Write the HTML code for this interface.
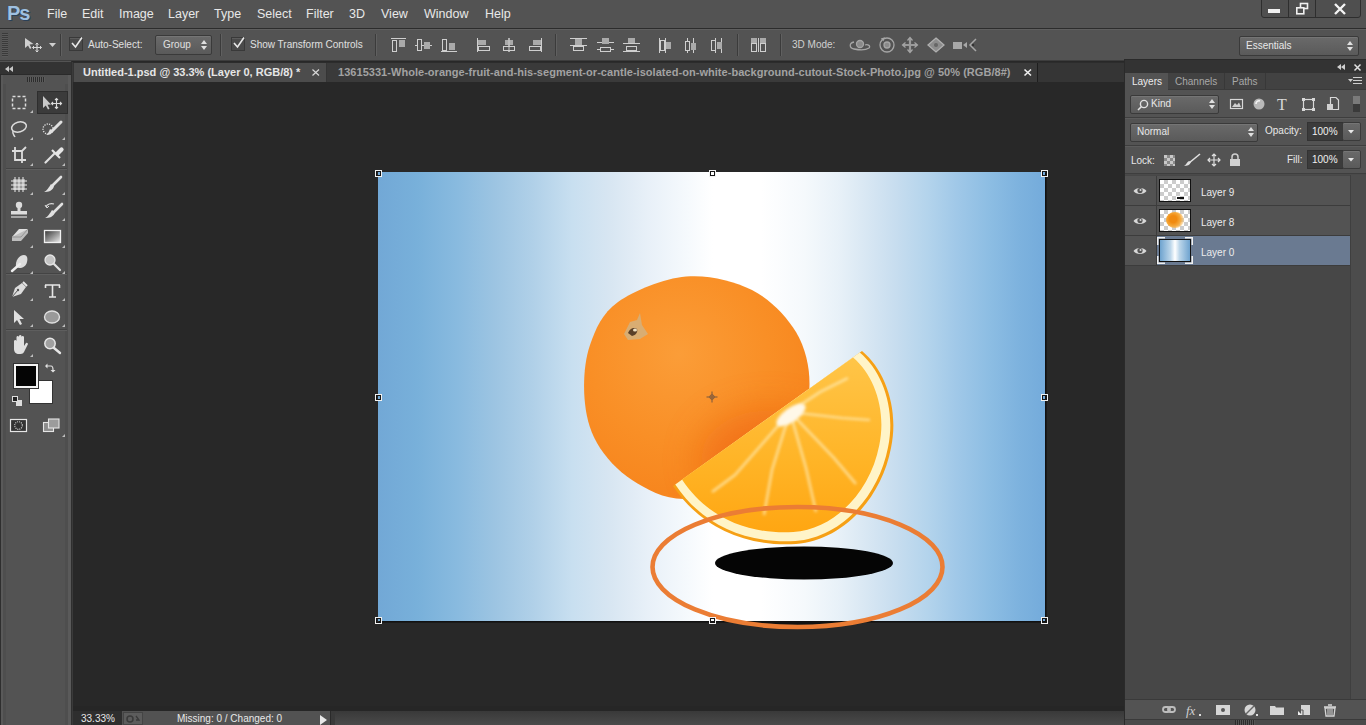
<!DOCTYPE html>
<html><head><meta charset="utf-8">
<style>
*{margin:0;padding:0;box-sizing:border-box}
html,body{width:1366px;height:725px;overflow:hidden;background:#282828;font-family:"Liberation Sans",sans-serif;color:#e0e0e0}
.a{position:absolute}
.t{position:absolute;white-space:nowrap;line-height:1}
svg{position:absolute;overflow:visible}
.menu{font-size:12.5px;color:#e8e8e8;top:8px}
.opt{font-size:10px;color:#e0e0e0}
.vs{position:absolute;width:2px;border-left:1px solid #3b3b3b;border-right:1px solid #606060}
.hs{position:absolute;height:2px;border-top:1px solid #3b3b3b;border-bottom:1px solid #606060}
.btn{position:absolute;border:1px solid #3a3a3a;border-radius:2px;background:linear-gradient(#6a6a6a,#5a5a5a);box-shadow:inset 0 1px 0 #757575}
.cb{position:absolute;width:14px;height:14px;border:1px solid #393939;background:#4a4a4a;box-shadow:inset 0 1px 0 #5c5c5c}
.tool{stroke:#d8d8d8;fill:none;stroke-width:1.3}
.tri{position:absolute;width:0;height:0;border-left:3px solid transparent;border-bottom:3px solid #bdbdbd}
</style></head><body>
<!-- ============ MENU BAR ============ -->
<div class="a" style="left:0;top:0;width:1366px;height:28px;background:#535353"></div>
<div class="a" style="left:0;top:28px;width:1366px;height:1px;background:#2c2c2c"></div>
<div class="t" style="left:7px;top:3px;font-size:20px;font-weight:bold;color:#9fc0e0;letter-spacing:-1px;text-shadow:1px 1px 0 #2a4058,-1px 0 0 #3a4a5a">Ps</div>
<div class="t menu" style="left:47px">File</div>
<div class="t menu" style="left:82px">Edit</div>
<div class="t menu" style="left:119px">Image</div>
<div class="t menu" style="left:168px">Layer</div>
<div class="t menu" style="left:214px">Type</div>
<div class="t menu" style="left:257px">Select</div>
<div class="t menu" style="left:306px">Filter</div>
<div class="t menu" style="left:349px">3D</div>
<div class="t menu" style="left:381px">View</div>
<div class="t menu" style="left:424px">Window</div>
<div class="t menu" style="left:485px">Help</div>
<!-- window buttons -->
<div class="a" style="left:1261px;top:-3px;width:100px;height:21px;border:1px solid #2e2e2e;border-radius:0 0 3px 3px;background:#4f4f4f"></div>
<div class="a" style="left:1288px;top:0;width:1px;height:18px;background:#2e2e2e"></div>
<div class="a" style="left:1315px;top:0;width:1px;height:18px;background:#2e2e2e"></div>
<div class="a" style="left:1268px;top:9px;width:12px;height:4px;background:#f0f0f0"></div>
<svg style="left:1296px;top:3px" width="14" height="12"><rect x="4.5" y="0.5" width="7" height="5" fill="none" stroke="#f0f0f0" stroke-width="1.6"/><rect x="0.8" y="4.8" width="7" height="6" fill="#4f4f4f" stroke="#f0f0f0" stroke-width="1.6"/></svg>
<svg style="left:1334px;top:3px" width="12" height="12"><path d="M1 1L11 11M11 1L1 11" stroke="#f4f4f4" stroke-width="2.4"/></svg>

<!-- ============ OPTIONS BAR ============ -->
<div class="a" style="left:0;top:29px;width:1366px;height:32px;background:#535353;border-top:1px solid #5f5f5f;border-bottom:1px solid #3d3d3d"></div>
<div class="a" style="left:2px;top:33px;width:6px;height:24px;background:repeating-linear-gradient(#3a3a3a 0 1px,#5a5a5a 1px 2px)"></div>
<!-- move tool icon -->
<svg style="left:24px;top:37px" width="20" height="16"><path d="M1 1L1 11L4 8.5L6 12L7.5 11L5.5 7.5L9.5 7Z" fill="#cfcfcf"/><path d="M13 6V15M8.5 10.5H17.5" stroke="#d8d8d8" stroke-width="1.2"/><path d="M11.5 7.5L13 6L14.5 7.5M11.5 13.5L13 15L14.5 13.5M10 9L8.5 10.5L10 12M16 9L17.5 10.5L16 12" stroke="#d8d8d8" fill="none" stroke-width="1"/></svg>
<svg style="left:49px;top:43px" width="7" height="4"><path d="M0 0H7L3.5 4Z" fill="#d0d0d0"/></svg>
<div class="vs" style="left:60px;top:34px;height:22px"></div>
<div class="cb" style="left:69px;top:37px"></div>
<svg style="left:70px;top:36px" width="14" height="14"><path d="M2 7L5.5 11L12 1.5" stroke="#e8e8e8" stroke-width="1.6" fill="none"/></svg>
<div class="t opt" style="left:88px;top:40px">Auto-Select:</div>
<div class="btn" style="left:155px;top:35px;width:57px;height:20px"></div>
<div class="t opt" style="left:163px;top:40px">Group</div>
<svg style="left:201px;top:40px" width="6" height="10"><path d="M0 4L3 0L6 4ZM0 6L3 10L6 6Z" fill="#e0e0e0"/></svg>
<div class="vs" style="left:220px;top:34px;height:22px"></div>
<div class="cb" style="left:231px;top:37px"></div>
<svg style="left:232px;top:36px" width="14" height="14"><path d="M2 7L5.5 11L12 1.5" stroke="#e8e8e8" stroke-width="1.6" fill="none"/></svg>
<div class="t opt" style="left:250px;top:40px">Show Transform Controls</div>
<div class="vs" style="left:375px;top:34px;height:22px"></div>
<!-- align icons -->
<svg style="left:390px;top:37px" width="160" height="16" fill="none" stroke="#cfcfcf" stroke-width="1">
 <path d="M1 1.5H16"/><rect x="2.5" y="3.5" width="4" height="11"/><rect x="9" y="3" width="6" height="7" fill="#aaa" stroke="none"/>
 <path d="M25 8.5H42"/><rect x="27.5" y="2.5" width="4" height="11" fill="#535353"/><rect x="34" y="5" width="6" height="7" fill="#aaa" stroke="none"/>
 <path d="M51 14.5H67"/><rect x="52.5" y="2.5" width="4" height="11"/><rect x="59" y="6" width="6" height="7" fill="#aaa" stroke="none"/>
 <path d="M87.5 1V15"/><rect x="88" y="3" width="8" height="5" fill="#aaa" stroke="none"/><rect x="88.5" y="9.5" width="11" height="4"/>
 <path d="M119 1V15"/><rect x="115" y="3" width="8" height="5" fill="#aaa" stroke="none"/><rect x="113.5" y="9.5" width="11" height="4" fill="#535353"/><path d="M119 1V15"/>
 <path d="M151.5 1V15"/><rect x="143" y="3" width="8" height="5" fill="#aaa" stroke="none"/><rect x="139.5" y="9.5" width="11" height="4"/>
</svg>
<div class="vs" style="left:555px;top:34px;height:22px"></div>
<svg style="left:568px;top:37px" width="160" height="16" fill="none" stroke="#cfcfcf" stroke-width="1">
 <path d="M2 1.5H19M2 8.5H19"/><rect x="7" y="2" width="7" height="6" fill="#aaa" stroke="none"/><rect x="5.5" y="9.5" width="10" height="4"/>
 <path d="M29 5.5H46M29 12.5H46"/><rect x="34" y="1" width="7" height="6" fill="#aaa" stroke="none"/><rect x="32.5" y="10.5" width="10" height="4" fill="#535353"/>
 <path d="M55 6.5H72M55 14.5H72"/><rect x="60" y="1" width="7" height="5" fill="#aaa" stroke="none"/><rect x="58.5" y="9.5" width="10" height="4"/>
 <path d="M91.5 1V16M97.5 1V16"/><rect x="92.5" y="3.5" width="4" height="10"/><rect x="98" y="5" width="5" height="7" fill="#aaa" stroke="none"/>
 <path d="M119.5 1V16M125.5 1V16"/><rect x="117.5" y="4.5" width="4" height="9" fill="#535353"/><rect x="123" y="6" width="5" height="7" fill="#aaa" stroke="none"/>
 <path d="M147.5 1V16M153.5 1V16"/><rect x="143.5" y="3.5" width="4" height="10"/><rect x="149" y="5" width="5" height="7" fill="#aaa" stroke="none"/>
</svg>
<div class="vs" style="left:737px;top:34px;height:22px"></div>
<svg style="left:750px;top:37px" width="18" height="16" fill="none" stroke="#cfcfcf" stroke-width="1"><rect x="1" y="1" width="6" height="5" fill="#aaa" stroke="none"/><rect x="1.5" y="6.5" width="5" height="8"/><path d="M8.5 1V15"/><rect x="10" y="1" width="6" height="5" fill="#aaa" stroke="none"/><rect x="10.5" y="6.5" width="5" height="8"/></svg>
<div class="vs" style="left:780px;top:34px;height:22px"></div>
<div class="t opt" style="left:792px;top:40px;color:#d0d0d0">3D Mode:</div>
<svg style="left:848px;top:36px" width="140" height="18" fill="none" stroke="#a6a6a6" stroke-width="1.3">
 <circle cx="12" cy="8" r="3.5" fill="#8a8a8a"/><path d="M6 6C1 7 1 12 6 13C11 14 18 14 21 12C23 10 20 8 17 9"/>
 <circle cx="39" cy="9" r="7"/><circle cx="39" cy="9" r="3" fill="#8a8a8a"/><path d="M33 3L36 2L35 5" stroke-width="1.1"/>
 <path d="M62 2V16M55 9H69" stroke-width="2.2" stroke="#9a9a9a"/><path d="M59.5 4.5L62 1.5L64.5 4.5M59.5 13.5L62 16.5L64.5 13.5M57.5 6.5L54.5 9L57.5 11.5M66.5 6.5L69.5 9L66.5 11.5" stroke-width="1.2"/>
 <path d="M88 2L96 9L88 16L80 9Z" fill="#8c8c8c" stroke="#b0b0b0"/><circle cx="88" cy="9" r="2" fill="#666" stroke="none"/>
 <g transform="translate(4 0)"><rect x="101" y="6" width="9" height="7" fill="#a8a8a8" stroke="none"/><path d="M111 9L115 6V12Z" fill="#a8a8a8" stroke="none"/><path d="M124 3L118 9L124 15" stroke-width="1.5"/><circle cx="121" cy="9" r="1.2" fill="#333" stroke="none"/></g>
</svg>
<!-- Essentials -->
<div class="btn" style="left:1239px;top:36px;width:120px;height:20px"></div>
<div class="t" style="left:1246px;top:41px;font-size:10px;color:#e8e8e8">Essentials</div>
<svg style="left:1347px;top:41px" width="6" height="10"><path d="M0 4L3 0L6 4ZM0 6L3 10L6 6Z" fill="#e0e0e0"/></svg>

<!-- ============ LEFT TOOLBAR ============ -->
<div class="a" style="left:0;top:61px;width:72px;height:664px;background:#535353;border-right:1px solid #2f2f2f"></div>
<div class="a" style="left:0;top:62px;width:71px;height:13px;background:#333333;border-bottom:1px solid #2a2a2a"></div>
<svg style="left:5px;top:66px" width="9" height="6"><path d="M4 0V6L0 3ZM8 0V6L4 3Z" fill="#c8c8c8"/></svg>
<div class="a" style="left:27px;top:77px;width:18px;height:5px;background:repeating-linear-gradient(90deg,#2c2c2c 0 1px,#5c5c5c 1px 2px)"></div>


<div class="a" style="left:0;top:75px;width:1px;height:650px;background:#2e2e2e"></div><div class="a" style="left:1px;top:75px;width:2px;height:650px;background:#595959"></div><div class="a" style="left:3px;top:84px;width:3px;height:641px;background:#4e4e4e"></div>
<div class="a" style="left:65px;top:84px;width:3px;height:641px;background:#4e4e4e"></div><div class="a" style="left:68px;top:75px;width:3px;height:650px;background:#5a5a5a"></div><div class="a" style="left:72px;top:62px;width:1px;height:663px;background:#3a3a3a"></div>
<div class="a" style="left:6px;top:168px;width:61px;height:2px;border-top:1px solid #444;border-bottom:1px solid #5e5e5e"></div>
<div class="a" style="left:6px;top:273px;width:61px;height:2px;border-top:1px solid #444;border-bottom:1px solid #5e5e5e"></div>
<div class="a" style="left:6px;top:329px;width:61px;height:2px;border-top:1px solid #444;border-bottom:1px solid #5e5e5e"></div>
<div class="a" style="left:37px;top:91px;width:31px;height:23px;background:#3b3b3b;border:1px solid #2e2e2e"></div>
<svg style="left:0;top:84px" width="72" height="360" fill="none" stroke="#dcdcdc" stroke-width="1.3">
 <!-- marquee (y 96-109) -->
 <rect x="12.5" y="12.5" width="13" height="12" stroke-dasharray="3 2" stroke-width="1.5"/>
 <!-- move -->
 <path d="M43 12L43 24L45.8 21.5L48 25.5L49.5 24.7L47.5 20.8L51 20.5Z" fill="#c8c8c8" stroke="none"/>
 <path d="M56.5 14.5V24.5M51.5 19.5H61.5M55 16L56.5 14.5L58 16M55 23L56.5 24.5L58 23M53 18L51.5 19.5L53 21M60 18L61.5 19.5L60 21" stroke-width="1.1"/>
 <!-- lasso (y121-137) -->
 <ellipse cx="19" cy="43" rx="7.5" ry="5" transform="rotate(-15 19 43)" stroke-width="1.5"/>
 <path d="M13 47C12 50 14 51 15 53" stroke-width="1.5"/>
 <!-- quick selection (x42-62,y121-136) -->
 <circle cx="48" cy="45" r="5" stroke-dasharray="1.2 1.2" stroke-width="1.4"/>
 <path d="M61 38L52 47" stroke="#e0e0e0" stroke-width="3" stroke-linecap="round"/>
 <path d="M46 51C49 51 52 50 53 47L50 45C49 47 48 50 46 51Z" fill="#e0e0e0" stroke="none"/>
 <!-- crop (y147-163) -->
 <path d="M15 63V76H26M12 67H22V79M22 67L26 63" stroke-width="1.8"/>
 <!-- eyedropper (x44-62,y147-163) -->
 <path d="M45.5 78.5L54 70" stroke="#e0e0e0" stroke-width="2.2" stroke-linecap="round"/>
 <path d="M52 66L60 74" stroke="#e6e6e6" stroke-width="2.2"/>
 <path d="M55 69L60 64A2 2 0 0 1 63 67L58 72Z" fill="#e6e6e6" stroke="none"/>
 <!-- healing (y177-191) -->
 <rect x="13" y="95" width="12" height="11" fill="#9a9a9a" stroke="none"/>
 <path d="M15 93V108M19 93V108M23 93V108M11 97H27M11 101H27M11 105H27" stroke="#eeeeee" stroke-width="1"/>
 <!-- brush (x42-62, y176-192) -->
 <path d="M61 93L53 101" stroke="#e0e0e0" stroke-width="2.6" stroke-linecap="round"/>
 <path d="M44 108C48 108 53 107 54 102L51 100C49 103 47 107 44 108Z" fill="#e0e0e0" stroke="none"/>
 <!-- stamp (y202-218) -->
 <circle cx="19" cy="121" r="3.2" fill="#dcdcdc" stroke="none"/><rect x="17.5" y="123" width="3" height="4" fill="#dcdcdc" stroke="none"/>
 <rect x="11" y="127" width="16" height="3.5" fill="#dcdcdc" stroke="none"/><path d="M11 133H27" stroke-width="1.2"/>
 <!-- history brush (x44-63,y203-218) -->
 <path d="M62 120L54 128" stroke="#e0e0e0" stroke-width="2.6" stroke-linecap="round"/>
 <path d="M45 134C49 134 54 133 55 128L52 126C50 129 48 133 45 134Z" fill="#e0e0e0" stroke="none"/>
 <path d="M46 123C47 120 51 119 54 120" stroke-width="1.3"/><path d="M45 121L47 124L49 122" stroke-width="1"/>
 <!-- eraser (x11-28,y229-242) -->
 <path d="M12 153L19 145H28L21 153Z" fill="#e0e0e0" stroke="none"/><path d="M12 153V157H21L28 149V145" fill="#bdbdbd" stroke="none"/><path d="M12 153H21L28 145" stroke="#8a8a8a" stroke-width="0.8"/>
 <!-- gradient (x44-60, y230-242) -->
 <defs><linearGradient id="gr" x1="0" y1="0" x2="1" y2="1"><stop offset="0" stop-color="#333"/><stop offset="1" stop-color="#eee"/></linearGradient></defs>
 <rect x="44.5" y="146.5" width="16" height="12" fill="url(#gr)" stroke="#f0f0f0" stroke-width="1.3"/>
 <!-- blur/smudge (x12-27, y255-270) -->
 <path d="M16 183C15 177 19 171 24 171C27 171 28 174 27 178C26 182 23 184 19 184" fill="#dcdcdc" stroke="none"/>
 <path d="M20 180L12 187" stroke="#eeeeee" stroke-width="2.4" stroke-linecap="round"/>
 <!-- dodge (x45-60,y255-270) -->
 <circle cx="50" cy="176" r="5" fill="#c4c4c4" stroke="#e6e6e6" stroke-width="1.3"/><path d="M54 180L60 186" stroke="#e0e0e0" stroke-width="2.2" stroke-linecap="round"/>
 <!-- pen (x11-27,y282-298) -->
 <path d="M12 213L15 204L22 199L26 203L21 210Z" fill="#dcdcdc" stroke="none"/><path d="M12 213L18 206" stroke="#555" stroke-width="1"/><circle cx="18" cy="206" r="1.2" fill="#555" stroke="none"/><path d="M23 198L27 202" stroke="#e6e6e6" stroke-width="2"/>
 <!-- type (x45-60,y284-297) -->
 <path d="M45 201H60M52.5 201V213M49 213H56M45.5 201V204M59.5 201V204" stroke="#e6e6e6" stroke-width="1.6"/>
 <!-- path selection (x14-24,y310-324) -->
 <path d="M14 226V239L17 236L20 241L22 240L19.5 235H24Z" fill="#e0e0e0" stroke="none"/>
 <!-- ellipse (x44-60,y310-323) -->
 <ellipse cx="52" cy="233" rx="7.5" ry="6" fill="#9a9a9a" stroke="#e0e0e0" stroke-width="1.4"/>
 <!-- hand (x10-27,y338-354) -->
 <path d="M14 263V257A1.3 1.3 0 0 1 16.5 257V253A1.3 1.3 0 0 1 19 253V252A1.3 1.3 0 0 1 21.5 252V253A1.3 1.3 0 0 1 24 253V262L26 259A1.3 1.3 0 0 1 28 260L24 268C23 270 21 270 19 270C16 270 14 268 14 265Z" fill="#e0e0e0" stroke="none"/>
 <!-- zoom (x44-61,y338-353) -->
 <circle cx="50" cy="259.5" r="5.2" fill="#a0a0a0" stroke="#e6e6e6" stroke-width="1.5"/><path d="M54 264L60 269" stroke="#e6e6e6" stroke-width="2.4" stroke-linecap="round"/>
 <!-- swap arrows (x45-55,y362-372) -->
 <path d="M47 282H51C53 282 53 284 53 286" stroke="#e0e0e0" stroke-width="1.2"/><path d="M45 282L47.5 279.5V284.5Z M50.5 286H55.5L53 288.5Z" fill="#e0e0e0" stroke="none"/>
 <!-- default colors (x12-22,y396-406) -->
 <rect x="16" y="316" width="6" height="6" fill="#ddd" stroke="none"/><rect x="12.5" y="312.5" width="5" height="5" fill="#222" stroke="#ddd" stroke-width="1"/>
 <!-- quick mask (x10-27,y419-432) -->
 <rect x="10.5" y="335.5" width="16" height="12" fill="#333" stroke="#e6e6e6" stroke-width="1.2"/><circle cx="18.5" cy="341.5" r="3.8" stroke="#cfcfcf" stroke-dasharray="1 1" stroke-width="1.2"/>
 <!-- screen mode (x43-60,y419-432) -->
 <rect x="43.5" y="338.5" width="10" height="9" fill="#8c8c8c" stroke="#e6e6e6" stroke-width="1.1"/><rect x="48.5" y="335" width="10.5" height="9" fill="#9c9c9c" stroke="#e6e6e6" stroke-width="1.1"/>
</svg>
<!-- tool corner triangles -->
<div class="tri" style="left:30px;top:110px"></div><div class="tri" style="left:30px;top:137px"></div><div class="tri" style="left:62px;top:137px"></div><div class="tri" style="left:30px;top:163px"></div><div class="tri" style="left:62px;top:163px"></div><div class="tri" style="left:30px;top:192px"></div><div class="tri" style="left:62px;top:192px"></div><div class="tri" style="left:30px;top:218px"></div><div class="tri" style="left:62px;top:218px"></div><div class="tri" style="left:30px;top:245px"></div><div class="tri" style="left:62px;top:245px"></div><div class="tri" style="left:30px;top:271px"></div><div class="tri" style="left:62px;top:271px"></div><div class="tri" style="left:30px;top:298px"></div><div class="tri" style="left:62px;top:298px"></div><div class="tri" style="left:30px;top:324px"></div><div class="tri" style="left:62px;top:324px"></div><div class="tri" style="left:30px;top:354px"></div><div class="tri" style="left:62px;top:434px"></div>
<div class="a" style="left:29px;top:380px;width:24px;height:24px;background:#fff;border:1px solid #333"></div>
<div class="a" style="left:14px;top:364px;width:24px;height:24px;background:#050505;border:2px solid #f4f4f4;outline:1px solid #333"></div>


<!-- ============ DOCUMENT TABS ============ -->
<div class="a" style="left:73px;top:62px;width:1051px;height:21px;background:#353535;border-top:1px solid #2c2c2c;border-bottom:1px solid #2e2e2e"></div>
<div class="a" style="left:74px;top:63px;width:252px;height:19px;background:#4c4c4c"></div>
<div class="t" style="left:83px;top:67px;font-size:11px;font-weight:bold;color:#e6e6e6">Untitled-1.psd @ 33.3% (Layer 0, RGB/8) *</div>
<svg style="left:312px;top:69px" width="8" height="7"><path d="M0.5 0.5L7 6.5M7 0.5L0.5 6.5" stroke="#d8d8d8" stroke-width="1.2"/></svg>
<div class="a" style="left:327px;top:63px;width:710px;height:19px;background:#3a3a3a"></div>
<div class="t" style="left:338px;top:67px;font-size:11px;font-weight:bold;color:#a2a2a2;letter-spacing:0.04px">13615331-Whole-orange-fruit-and-his-segment-or-cantle-isolated-on-white-background-cutout-Stock-Photo.jpg @ 50% (RGB/8#)</div>
<svg style="left:1024px;top:69px" width="8" height="7"><path d="M0.5 0.5L7 6.5M7 0.5L0.5 6.5" stroke="#f0f0f0" stroke-width="1.6"/></svg>
<div class="a" style="left:1037px;top:63px;width:1px;height:19px;background:#1e1e1e"></div>
<div class="a" style="left:73px;top:82px;width:1051px;height:628px;background:#282828"></div>

<!-- ============ STATUS BAR ============ -->
<div class="a" style="left:73px;top:706px;width:1051px;height:5px;background:#262626"></div>
<div class="a" style="left:73px;top:711px;width:1051px;height:14px;background:linear-gradient(#393939,#4a4a4a)"></div>
<div class="a" style="left:122px;top:711px;width:208px;height:14px;background:#525252"></div>
<div class="a" style="left:73px;top:711px;width:49px;height:14px;background:#2e2e2e"></div>
<div class="a" style="left:330px;top:711px;width:5px;height:14px;background:#3a3a3a;border-left:1px solid #2a2a2a"></div>
<div class="t" style="left:81px;top:714px;font-size:10px;color:#e8e8e8">33.33%</div>
<div class="a" style="left:123px;top:712px;width:20px;height:13px;background:#5c5c5c;border:1px solid #444"></div>
<svg style="left:125px;top:714px" width="18" height="10"><circle cx="5" cy="5" r="3" fill="none" stroke="#3a3a3a" stroke-width="1.5"/><path d="M11 2L14 6H11" stroke="#3a3a3a" fill="none" stroke-width="1.3"/></svg>
<div class="t" style="left:177px;top:714px;font-size:10px;color:#e8e8e8">Missing: 0 / Changed: 0</div>
<svg style="left:320px;top:715px" width="7" height="10"><path d="M0 0L7 5L0 10Z" fill="#e8e8e8"/></svg>

<!-- ============ CANVAS ============ -->

<div class="a" style="left:378px;top:172px;width:667px;height:449px;background:linear-gradient(90deg,#72a8d6 0%,#78b0da 5.8%,#88badf 11.7%,#9cc4e2 17.4%,#b0d0e8 23.2%,#c8dff0 29.1%,#d8e6f2 34.9%,#e8f0f8 40.5%,#f6fafd 46.6%,#ffffff 50.2%,#ffffff 57.4%,#f5f9fc 64%,#e8f1f8 69%,#d8e7f3 73.3%,#c7ddef 77.7%,#b4d4ec 82.3%,#a0c8e8 86.8%,#8cbde3 91.8%,#7db2de 96.2%,#74abdb 100%);box-shadow:1px 1px 0 #111,2px 2px 0 #1a1a1a"></div>
<svg style="left:0;top:0" width="1366" height="725">
 <defs>
  <radialGradient id="og" cx="0.42" cy="0.35" r="0.72">
   <stop offset="0" stop-color="#fb9d38"/>
   <stop offset="0.55" stop-color="#f98f26"/>
   <stop offset="0.88" stop-color="#f7861e"/>
   <stop offset="1" stop-color="#faa04a"/>
  </radialGradient>
  <linearGradient id="fl" x1="0" y1="0" x2="0" y2="1">
   <stop offset="0" stop-color="#ffc548"/>
   <stop offset="0.6" stop-color="#ffb426"/>
   <stop offset="1" stop-color="#ffa612"/>
  </linearGradient>
  <filter id="bl" x="-100%" y="-100%" width="300%" height="300%"><feGaussianBlur stdDeviation="18"/></filter><filter id="bl2" x="-50%" y="-50%" width="200%" height="200%"><feGaussianBlur stdDeviation="1.5"/></filter>
 </defs>
 <clipPath id="ballc"><path d="M686 276.5C708.3 274.5 733.7 280.8 752 290C770.3 299.2 786.4 316.2 796 332C805.6 347.8 809.7 367.5 809.5 385C809.3 402.5 804.6 421.3 795 437C785.4 452.7 770.5 468.7 752 479C733.5 489.3 704.0 498.8 684 499C664.0 499.2 646.5 489.3 632 480C617.5 470.7 604.9 456.7 597 443C589.1 429.3 585.7 414.3 584.5 398C583.3 381.7 584.4 361.0 590 345C595.6 329.0 602.0 313.4 618 302C634.0 290.6 663.7 278.5 686 276.5Z"/></clipPath>
 <path d="M686 276.5C708.3 274.5 733.7 280.8 752 290C770.3 299.2 786.4 316.2 796 332C805.6 347.8 809.7 367.5 809.5 385C809.3 402.5 804.6 421.3 795 437C785.4 452.7 770.5 468.7 752 479C733.5 489.3 704.0 498.8 684 499C664.0 499.2 646.5 489.3 632 480C617.5 470.7 604.9 456.7 597 443C589.1 429.3 585.7 414.3 584.5 398C583.3 381.7 584.4 361.0 590 345C595.6 329.0 602.0 313.4 618 302C634.0 290.6 663.7 278.5 686 276.5Z" fill="url(#og)"/>
 <g clip-path="url(#ballc)"><ellipse cx="770" cy="460" rx="70" ry="50" fill="#ec5a0a" opacity="0.5" filter="url(#bl)"/></g>
 <path d="M624 334L630 322L637 320L640 313L642 325L648 334L640 339L628 340Z" fill="#d9ad72"/>
 <path d="M628 333C630 328 634 327 637 329C638 332 636 335 632 336Z" fill="#5a4028"/>
 <ellipse cx="635" cy="330" rx="2" ry="1.5" fill="#f0e0c0"/>
 <!-- wedge --><clipPath id="wc"><path d="M673 486L862 351C886 371 899 410 891 448C881 500 841 541 796 544C745 547 700 527 673 486Z" transform="translate(767.5 418.5) scale(0.915) translate(-767.5 -418.5)"/></clipPath>
 <path d="M673 486L862 351C886 371 899 410 891 448C881 500 841 541 796 544C745 547 700 527 673 486Z" fill="#f6a015"/>
 <path d="M673 486L862 351C886 371 899 410 891 448C881 500 841 541 796 544C745 547 700 527 673 486Z" fill="#fff4c8" transform="translate(767.5 418.5) scale(0.976) translate(-767.5 -418.5)"/>
 <path d="M673 486L862 351C886 371 899 410 891 448C881 500 841 541 796 544C745 547 700 527 673 486Z" fill="url(#fl)" transform="translate(767.5 418.5) scale(0.905) translate(-767.5 -418.5)"/>
 <g clip-path="url(#wc)">
 <g stroke="#fff0c0" stroke-width="2.2" fill="none" opacity="0.8" filter="url(#bl2)">
  <path d="M790 412L772 470L764 515"/><path d="M790 412L806 468L816 512"/><path d="M790 412L834 458L856 484"/><path d="M790 412L842 418L870 420"/><path d="M790 412L735 475L712 492"/><path d="M790 412L820 392L848 378"/>
 </g>
 <ellipse cx="791" cy="415" rx="17" ry="7" transform="rotate(-35 791 415)" fill="#fff8e8" filter="url(#bl2)"/>
 </g>
 <!-- shadow -->
 <ellipse cx="804" cy="563" rx="89" ry="16.5" fill="#050505"/>
 <!-- annotation --><path d="M752 621H842C825 626 770 626 752 621Z" fill="#111"/>
 <ellipse cx="797.5" cy="567" rx="145" ry="60" fill="none" stroke="#eb7d34" stroke-width="4.6"/>
 <!-- transform handles -->
 <g><rect x="375.5" y="170.5" width="6" height="6" fill="none" stroke="#f2f2f2" stroke-width="1"/><rect x="376.5" y="171.5" width="4" height="4" fill="none" stroke="#151515" stroke-width="1"/><rect x="709.5" y="170.5" width="6" height="6" fill="none" stroke="#f2f2f2" stroke-width="1"/><rect x="710.5" y="171.5" width="4" height="4" fill="none" stroke="#151515" stroke-width="1"/><rect x="1041.5" y="170.5" width="6" height="6" fill="none" stroke="#f2f2f2" stroke-width="1"/><rect x="1042.5" y="171.5" width="4" height="4" fill="none" stroke="#151515" stroke-width="1"/><rect x="375.5" y="394.5" width="6" height="6" fill="none" stroke="#f2f2f2" stroke-width="1"/><rect x="376.5" y="395.5" width="4" height="4" fill="none" stroke="#151515" stroke-width="1"/><rect x="1041.5" y="394.5" width="6" height="6" fill="none" stroke="#f2f2f2" stroke-width="1"/><rect x="1042.5" y="395.5" width="4" height="4" fill="none" stroke="#151515" stroke-width="1"/><rect x="375.5" y="617.5" width="6" height="6" fill="none" stroke="#f2f2f2" stroke-width="1"/><rect x="376.5" y="618.5" width="4" height="4" fill="none" stroke="#151515" stroke-width="1"/><rect x="709.5" y="617.5" width="6" height="6" fill="none" stroke="#f2f2f2" stroke-width="1"/><rect x="710.5" y="618.5" width="4" height="4" fill="none" stroke="#151515" stroke-width="1"/><rect x="1041.5" y="617.5" width="6" height="6" fill="none" stroke="#f2f2f2" stroke-width="1"/><rect x="1042.5" y="618.5" width="4" height="4" fill="none" stroke="#151515" stroke-width="1"/></g>
 <g stroke="#6a5040" stroke-width="1" opacity="0.9"><path d="M712 391.5V402.5M706.5 397H717.5"/><circle cx="712" cy="397" r="2.2" fill="none"/></g>
</svg>


<!-- ============ RIGHT PANEL ============ -->

<div class="a" style="left:1124px;top:59px;width:242px;height:666px;background:#535353;border-left:1px solid #2a2a2a;border-top:1px solid #2a2a2a"></div>
<div class="a" style="left:1125px;top:60px;width:241px;height:13px;background:#333333"></div>
<svg style="left:1337px;top:64px" width="8" height="6"><path d="M4 0V6L0 3ZM8 0V6L4 3Z" fill="#d0d0d0"/></svg>
<svg style="left:1354px;top:64px" width="7" height="7"><path d="M0.5 0.5L6.5 6.5M6.5 0.5L0.5 6.5" stroke="#e0e0e0" stroke-width="1.5"/></svg>
<div class="a" style="left:1125px;top:73px;width:241px;height:17px;background:#424242;border-bottom:1px solid #3a3a3a"></div>
<div class="a" style="left:1125px;top:73px;width:43px;height:17px;background:#535353"></div>
<div class="a" style="left:1224px;top:73px;width:1px;height:16px;background:#383838"></div>
<div class="a" style="left:1265px;top:73px;width:1px;height:16px;background:#383838"></div>
<div class="t" style="left:1132px;top:77px;font-size:10px;color:#ececec">Layers</div>
<div class="t" style="left:1175px;top:77px;font-size:10px;color:#a8a8a8">Channels</div>
<div class="t" style="left:1232px;top:77px;font-size:10px;color:#a8a8a8">Paths</div>
<svg style="left:1348px;top:76px" width="14" height="10"><path d="M0 3H5L2.5 6Z" fill="#cfcfcf"/><path d="M5 1.5H14M5 4.5H14M5 7.5H14" stroke="#cfcfcf" stroke-width="1.2"/></svg>
<!-- kind row -->
<div class="btn" style="left:1130px;top:95px;width:89px;height:19px"></div>
<svg style="left:1137px;top:99px" width="12" height="12"><circle cx="7" cy="5" r="3.6" fill="none" stroke="#e0e0e0" stroke-width="1.4"/><path d="M4.5 7.5L1 11" stroke="#e0e0e0" stroke-width="1.6"/></svg>
<div class="t" style="left:1151px;top:99px;font-size:10px;color:#e8e8e8">Kind</div>
<svg style="left:1209px;top:99px" width="6" height="10"><path d="M0 4L3 0L6 4ZM0 6L3 10L6 6Z" fill="#e0e0e0"/></svg>
<svg style="left:1229px;top:96px" width="135" height="18" fill="none" stroke="#d8d8d8" stroke-width="1.2">
 <rect x="1.5" y="3.5" width="12" height="9"/><path d="M3 11L6 7L8 9L10 6.5L12 11Z" fill="#d0d0d0" stroke="none"/>
 <circle cx="30" cy="8" r="5.5" fill="#b8b8b8" stroke="none"/><path d="M27 8A3 3 0 0 1 31 5" stroke="#f4f4f4" stroke-width="1.6"/>
 <text x="48" y="14" font-family="Liberation Serif" font-size="16" fill="#d8d8d8" stroke="none">T</text>
 <rect x="74.5" y="3.5" width="10" height="10"/><g fill="#d8d8d8" stroke="none"><rect x="73" y="2" width="3" height="3"/><rect x="83" y="2" width="3" height="3"/><rect x="73" y="12" width="3" height="3"/><rect x="83" y="12" width="3" height="3"/></g>
 <path d="M101.5 1.5H107L109.5 4V13.5H101.5Z"/><rect x="98" y="8" width="6" height="6" fill="#d0d0d0" stroke="none"/>
 <rect x="124" y="0" width="7" height="16" fill="#3a3a3a" stroke="none"/><rect x="124" y="0" width="7" height="8" fill="#7a7a7a" stroke="none"/>
</svg>
<div class="a" style="left:1125px;top:117px;width:241px;height:2px;border-top:1px solid #3e3e3e;border-bottom:1px solid #5c5c5c"></div>
<!-- blend row -->
<div class="btn" style="left:1130px;top:123px;width:128px;height:19px"></div>
<div class="t" style="left:1137px;top:127px;font-size:10px;color:#e8e8e8">Normal</div>
<svg style="left:1248px;top:127px" width="6" height="10"><path d="M0 4L3 0L6 4ZM0 6L3 10L6 6Z" fill="#e0e0e0"/></svg>
<div class="t" style="left:1265px;top:126px;font-size:10px;color:#e8e8e8">Opacity:</div>
<div class="a" style="left:1307px;top:122px;width:36px;height:19px;background:#3b3b3b;border:1px solid #333"></div>
<div class="t" style="left:1312px;top:127px;font-size:10px;color:#f0f0f0">100%</div>
<div class="btn" style="left:1342px;top:122px;width:19px;height:19px"></div>
<svg style="left:1348px;top:130px" width="6" height="4"><path d="M0 0H6L3 3.5Z" fill="#e8e8e8"/></svg>
<div class="a" style="left:1125px;top:145px;width:241px;height:2px;border-top:1px solid #3e3e3e;border-bottom:1px solid #5c5c5c"></div>
<!-- lock row -->
<div class="t" style="left:1131px;top:156px;font-size:10px;color:#e8e8e8">Lock:</div>
<svg style="left:1163px;top:153px" width="80" height="14">
 <g fill="#c8c8c8"><rect x="1" y="2" width="11" height="11" fill="#8a8a8a"/><rect x="1" y="2" width="3" height="3"/><rect x="7" y="2" width="3" height="3"/><rect x="4" y="5" width="3" height="3"/><rect x="10" y="5" width="2" height="3"/><rect x="1" y="8" width="3" height="3"/><rect x="7" y="8" width="3" height="3"/><rect x="4" y="11" width="3" height="2"/><rect x="10" y="11" width="2" height="2"/></g>
 <path d="M37 1L26 10" stroke="#e0e0e0" stroke-width="1.6"/><path d="M21 13C24 13 27 12 28 9L26 8C24 9 23 12 21 13Z" fill="#e0e0e0"/>
 <path d="M51 1V13M45 7H57M49 3L51 1L53 3M49 11L51 13L53 11M47 5L45 7L47 9M55 5L57 7L55 9" stroke="#e0e0e0" stroke-width="1.2" fill="none"/>
 <rect x="67" y="6" width="10" height="7" fill="#d0d0d0"/><path d="M69 6V4A3 3 0 0 1 75 4V6" fill="none" stroke="#d0d0d0" stroke-width="1.5"/>
</svg>
<div class="t" style="left:1287px;top:155px;font-size:10px;color:#e8e8e8">Fill:</div>
<div class="a" style="left:1307px;top:150px;width:36px;height:19px;background:#3b3b3b;border:1px solid #333"></div>
<div class="t" style="left:1312px;top:155px;font-size:10px;color:#f0f0f0">100%</div>
<div class="btn" style="left:1342px;top:150px;width:19px;height:19px"></div>
<svg style="left:1348px;top:158px" width="6" height="4"><path d="M0 0H6L3 3.5Z" fill="#e8e8e8"/></svg>
<div class="a" style="left:1125px;top:173px;width:241px;height:2px;border-top:1px solid #3e3e3e;border-bottom:1px solid #4a4a4a"></div>
<!-- layer list -->
<div class="a" style="left:1125px;top:175px;width:225px;height:524px;background:#474747"></div>
<div class="a" style="left:1350px;top:175px;width:16px;height:525px;background:#4c4c4c;border-left:1px solid #3f3f3f"></div>
<div class="a" style="left:1125px;top:176px;width:225px;height:30px;background:#535353;border-bottom:1px solid #3c3c3c"></div>
<div class="a" style="left:1156px;top:176px;width:194px;height:30px;background:#535353;border-left:1px solid #3c3c3c;border-bottom:1px solid #3c3c3c"></div>
<svg style="left:1133px;top:186px" width="14" height="10"><path d="M0.5 5C3 1 11 1 13.5 5C11 9 3 9 0.5 5Z" fill="#d8d8d8"/><circle cx="7" cy="4.6" r="2.6" fill="#535353"/><circle cx="7.5" cy="4" r="1" fill="#d8d8d8"/></svg>
<div class="t" style="left:1201px;top:188px;font-size:10px;color:#ececec">Layer 9</div>
<div class="a" style="left:1125px;top:206px;width:225px;height:30px;background:#535353;border-bottom:1px solid #3c3c3c"></div>
<div class="a" style="left:1156px;top:206px;width:194px;height:30px;background:#535353;border-left:1px solid #3c3c3c;border-bottom:1px solid #3c3c3c"></div>
<svg style="left:1133px;top:216px" width="14" height="10"><path d="M0.5 5C3 1 11 1 13.5 5C11 9 3 9 0.5 5Z" fill="#d8d8d8"/><circle cx="7" cy="4.6" r="2.6" fill="#535353"/><circle cx="7.5" cy="4" r="1" fill="#d8d8d8"/></svg>
<div class="t" style="left:1201px;top:218px;font-size:10px;color:#ececec">Layer 8</div>
<div class="a" style="left:1125px;top:236px;width:225px;height:30px;background:#535353;border-bottom:1px solid #3c3c3c"></div>
<div class="a" style="left:1156px;top:236px;width:194px;height:30px;background:#6a7a91;border-left:1px solid #3c3c3c;border-bottom:1px solid #3c3c3c"></div>
<svg style="left:1133px;top:246px" width="14" height="10"><path d="M0.5 5C3 1 11 1 13.5 5C11 9 3 9 0.5 5Z" fill="#d8d8d8"/><circle cx="7" cy="4.6" r="2.6" fill="#535353"/><circle cx="7.5" cy="4" r="1" fill="#d8d8d8"/></svg>
<div class="t" style="left:1201px;top:248px;font-size:10px;color:#ececec">Layer 0</div>
<div class="a" style="left:1159px;top:179px;width:32px;height:23px;border:1px solid #111;background-color:#fff;background-image:linear-gradient(45deg,#ccc 25%,transparent 25%,transparent 75%,#ccc 75%),linear-gradient(45deg,#ccc 25%,transparent 25%,transparent 75%,#ccc 75%);background-size:8px 8px;background-position:0 0,4px 4px"></div>
<div class="a" style="left:1177px;top:197px;width:7px;height:2px;background:#111"></div>
<div class="a" style="left:1159px;top:209px;width:32px;height:23px;border:1px solid #111;background-color:#fff;background-image:linear-gradient(45deg,#ccc 25%,transparent 25%,transparent 75%,#ccc 75%),linear-gradient(45deg,#ccc 25%,transparent 25%,transparent 75%,#ccc 75%);background-size:8px 8px;background-position:0 0,4px 4px"></div>
<div class="a" style="left:1166px;top:212px;width:18px;height:16px;border-radius:50%;background:radial-gradient(circle at 40% 45%,#f08a10 0 25%,#f5a83a 50%,rgba(250,200,120,0.5) 75%,rgba(255,255,255,0) 100%)"></div>
<svg style="left:1157px;top:237px" width="36" height="27" fill="none" stroke="#f0f0f0" stroke-width="1.5"><path d="M0.75 8V0.75H8M28 0.75H35.25V8M35.25 19V26.25H28M8 26.25H0.75V19"/></svg>
<div class="a" style="left:1159px;top:239px;width:32px;height:23px;border:1px solid #111;background:linear-gradient(90deg,#6ea3cf,#bcd6ea 35%,#fff 50%,#bcd6ea 65%,#6ea3cf)"></div>

<div class="a" style="left:1125px;top:699px;width:241px;height:21px;background:#535353;border-top:1px solid #3a3a3a;border-bottom:1px solid #3a3a3a"></div>
<div class="a" style="left:1125px;top:720px;width:241px;height:5px;background:#4a4a4a"></div>
<div class="a" style="left:1235px;top:720px;width:20px;height:5px;background:repeating-linear-gradient(90deg,#2c2c2c 0 1px,#555 1px 2px)"></div>
<svg style="left:1160px;top:703px" width="180" height="14">
 <g fill="none" stroke="#bdbdbd" stroke-width="1.8"><rect x="3" y="4" width="7" height="5" rx="2.5"/><rect x="8" y="4" width="7" height="5" rx="2.5"/></g>
 <text x="26" y="12" font-family="Liberation Serif" font-style="italic" font-size="13" fill="#d0d0d0">fx</text><rect x="39" y="11" width="2" height="2" fill="#ddd"/>
 <rect x="56" y="2" width="14" height="10" fill="#d6d6d6"/><circle cx="63" cy="7" r="2" fill="#555"/>
 <circle cx="90" cy="7" r="5.5" fill="#d6d6d6"/><path d="M86 11L94 3" stroke="#666" stroke-width="1.5"/><rect x="96" y="11" width="2" height="2" fill="#ddd"/>
 <path d="M110 3H115L116 4.5H124V12H110Z" fill="#d6d6d6"/>
 <rect x="141" y="2" width="9" height="10" fill="#d6d6d6"/><path d="M138 7H143V12" fill="none" stroke="#555" stroke-width="1"/><path d="M138 8L142 12H138Z" fill="#eee"/>
 <path d="M164 4H176M168 2H172" stroke="#d6d6d6" stroke-width="1.5"/><path d="M165 5H175L174 13H166Z" fill="none" stroke="#d6d6d6" stroke-width="1.3"/><path d="M168 6V12M170 6V12M172 6V12" stroke="#d6d6d6" stroke-width="1"/>
</svg>

</body></html>
